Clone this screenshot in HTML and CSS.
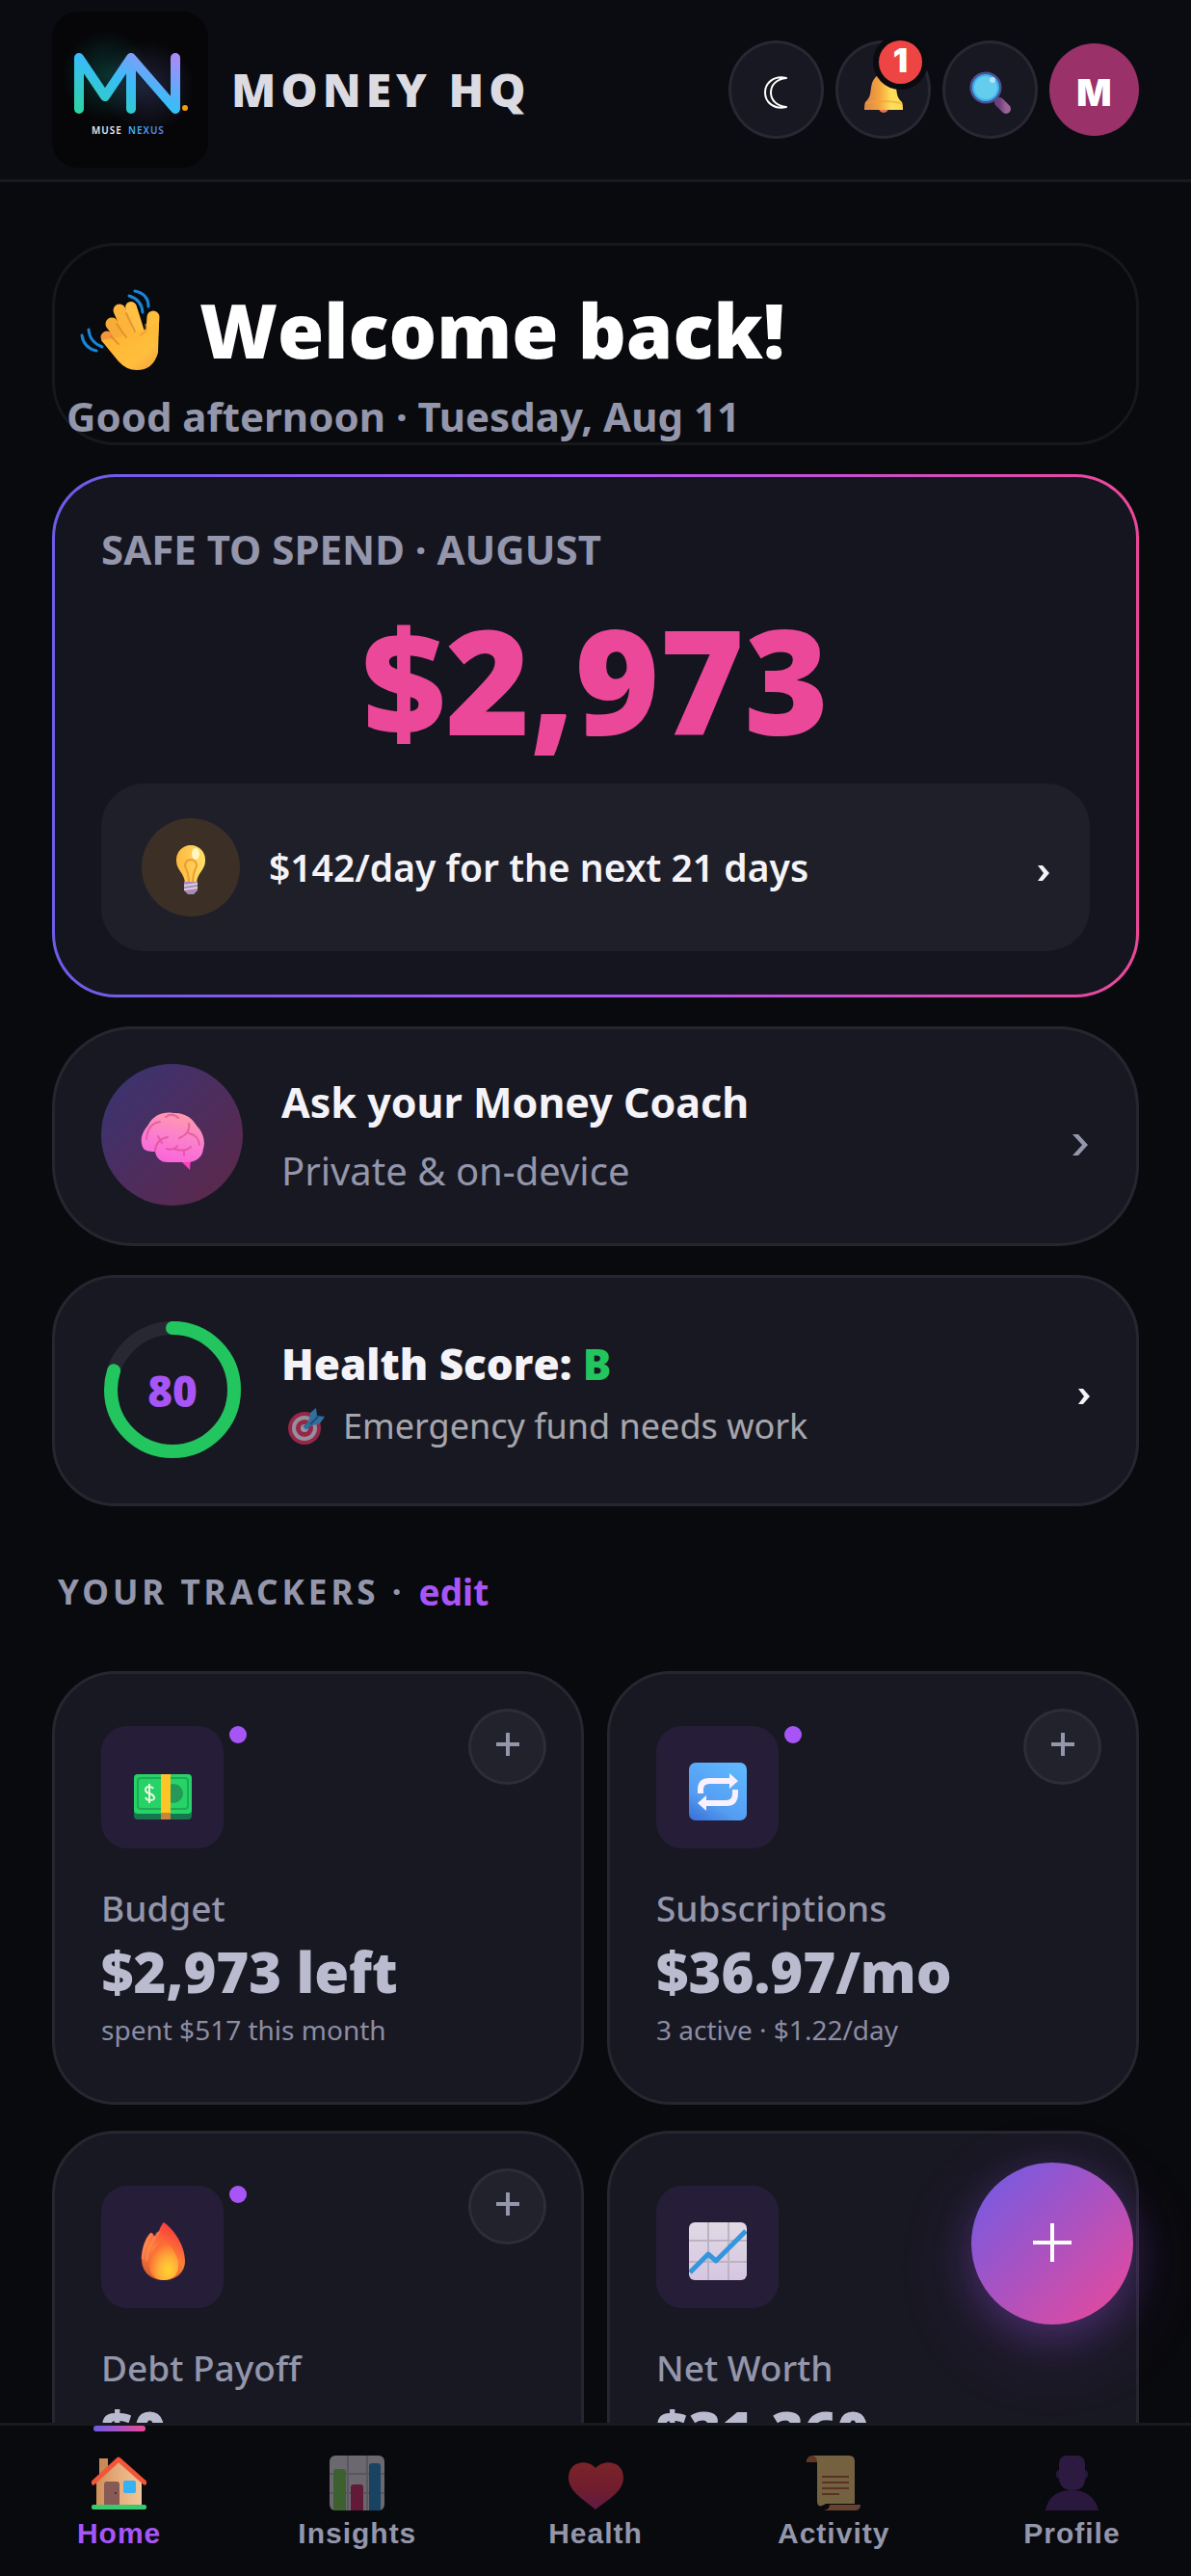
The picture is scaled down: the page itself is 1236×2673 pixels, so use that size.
FILE: index.html
```html
<!DOCTYPE html>
<html lang="en">
<head>
<meta charset="utf-8">
<meta name="viewport" content="width=device-width, initial-scale=1">
<title>Money HQ</title>
<link rel="stylesheet" href="styles.css">
</head>
<body>
<div class="app">
  <header class="topbar">
    <svg class="logo" viewBox="0 0 162 162" role="img" aria-label="Muse Nexus">
      <defs>
        <linearGradient id="mn" x1="0" y1="1" x2="1" y2="0">
          <stop offset="0" stop-color="#2dd4a8"/><stop offset=".5" stop-color="#38bdf8"/><stop offset="1" stop-color="#a78bfa"/>
        </linearGradient>
        <radialGradient id="glowA"><stop offset="0" stop-color="#14b8a6" stop-opacity=".24"/><stop offset="1" stop-color="#14b8a6" stop-opacity="0"/></radialGradient>
        <radialGradient id="glowB"><stop offset="0" stop-color="#818cf8" stop-opacity=".2"/><stop offset="1" stop-color="#818cf8" stop-opacity="0"/></radialGradient>
        <linearGradient id="nexus"><stop offset="0" stop-color="#38bdf8"/><stop offset="1" stop-color="#5b7fe0"/></linearGradient>
      </defs>
      <rect width="162" height="162" rx="27" fill="#060608"/>
      <circle cx="57" cy="66" r="46" fill="url(#glowA)"/>
      <circle cx="100" cy="78" r="48" fill="url(#glowB)"/>
      <path d="M28 101V48L55 88L82 48V101M82 48L128 101V48" fill="none" stroke="url(#mn)" stroke-width="10" stroke-linecap="round" stroke-linejoin="round"/>
      <circle cx="138" cy="100" r="3" fill="#f59e0b"/>
      <text class="logo-text" x="41" y="127" fill="#e8e8ee">MUSE</text>
      <text class="logo-text" x="79" y="127" fill="url(#nexus)">NEXUS</text>
    </svg>
    <div class="brand">MONEY HQ</div>
    <div class="actions">
      <button class="round" type="button" aria-label="Theme">
        <svg width="30" height="34" viewBox="0 0 30 34"><path d="M25 2C12 -1 3 7 3 17S12 35 25 32C15 31 9 25 9 17S15 3 25 2Z" fill="none" stroke="#fff" stroke-width="2" stroke-linejoin="round"/></svg>
      </button>
      <button class="round" type="button" aria-label="Notifications, 1 new">
        <svg width="44" height="44" viewBox="0 0 44 44">
          <defs><linearGradient id="bell"><stop offset=".1" stop-color="#e08a48"/><stop offset=".4" stop-color="#f5a63c"/><stop offset=".7" stop-color="#ffdf5c"/><stop offset="1" stop-color="#ffd850"/></linearGradient></defs>
          <circle cx="22" cy="38" r="5" fill="#e0735a"/>
          <path d="M22 3C13 3 10 10 9 17C8 26 7 28 3 32Q2 34 2 40H42Q42 34 41 32C37 28 36 26 35 17C34 10 31 3 22 3Z" fill="url(#bell)"/>
          <path d="M4 33Q22 29 40 33" fill="none" stroke="#f0a33c" stroke-width="2" opacity=".6"/>
        </svg>
        <span class="badge">1</span>
      </button>
      <button class="round" type="button" aria-label="Search">
        <svg width="44" height="44" viewBox="0 0 44 44">
          <defs><linearGradient id="handle"><stop offset="0" stop-color="#6d3f7c"/><stop offset="1" stop-color="#9c6398"/></linearGradient></defs>
          <path d="M31 32L38 39" stroke="url(#handle)" stroke-width="10" stroke-linecap="round"/>
          <circle cx="17" cy="17" r="15" fill="#62cdec" stroke="#4a5394" stroke-width="3"/>
          <circle cx="17" cy="17" r="13" fill="none" stroke="#3fb0ef" stroke-width="2"/>
          <ellipse cx="24" cy="9" rx="3" ry="3" fill="#b8e4fa"/>
        </svg>
      </button>
      <button class="avatar" type="button" aria-label="Account">M</button>
    </div>
  </header>

  <main class="content">
    <section class="welcome">
      <h1 class="welcome-title">
        <svg width="84" height="84" viewBox="0 0 84 84" aria-hidden="true">
          <defs><linearGradient id="hand" x1="0" y1="0" x2="1" y2="1"><stop offset="0" stop-color="#ffb02e"/><stop offset=".7" stop-color="#ffbe3d"/><stop offset="1" stop-color="#f3a03c"/></linearGradient></defs>
          <g fill="none" stroke="#1686d9" stroke-width="3" stroke-linecap="round"><path d="M57 2Q71 5 71 18M51 7Q64 11 65 24M2 48Q4 61 17 64M9 42Q10 55 23 60"/></g>
          <path d="M76 29L74 56" stroke="#ffbe3d" stroke-width="13" stroke-linecap="round"/>
          <path d="M28 50L46 68" stroke="#f5963f" stroke-width="13" stroke-linecap="round"/>
          <path d="M33 36L51 60" stroke="#f7ab38" stroke-width="13" stroke-linecap="round"/>
          <path d="M41 22L55 54" stroke="#fcb53a" stroke-width="13" stroke-linecap="round"/>
          <path d="M53 19L62 48" stroke="#ffc044" stroke-width="12" stroke-linecap="round"/>
          <path d="M22 53L40 75Q48 84 59 84Q76 84 81 66L82 34L68 42L56 44L40 50Z" fill="url(#hand)"/>
          <path d="M48 25L57 44M38 36L48 50M32 49L40 57" stroke="#dd8526" stroke-width="2" stroke-linecap="round" opacity=".7"/>
          <path d="M68 36Q71 44 62 48" fill="none" stroke="#eb972b" stroke-width="2" opacity=".6"/>
        </svg>
        <span>Welcome back!</span>
      </h1>
      <p class="welcome-sub">Good afternoon · Tuesday, Aug 11</p>
    </section>

    <section class="safe">
      <h2 class="safe-label">SAFE TO SPEND · AUGUST</h2>
      <div class="safe-amount">$2,973</div>
      <button class="tip" type="button">
        <span class="tip-icon">
          <svg width="32" height="52" viewBox="0 0 32 52">
            <defs><linearGradient id="bulb"><stop offset="0" stop-color="#fdb83c"/><stop offset="1" stop-color="#ffe06a"/></linearGradient></defs>
            <path d="M16 0A15 15 0 0 0 1 16C1 26 9 28 10 39H22C23 28 31 26 31 16A15 15 0 0 0 16 0Z" fill="url(#bulb)"/>
            <path d="M14 39Q14 29 10 22Q10 15 16 15T22 22Q18 29 18 39" fill="none" stroke="#f39a35" stroke-width="2"/>
            <ellipse cx="21" cy="9" rx="4" ry="6" fill="#fff6c4"/>
            <path d="M9 38H23V47L19 51H13L9 47Z" fill="#a78bb4"/><path d="M9 42L23 40M9 46L23 44" stroke="#dccbe2" stroke-width="2"/>
          </svg>
        </span>
        <span class="tip-text">$142/day for the next 21 days</span>
        <svg class="chev-sm" viewBox="0 0 12 16"><path d="M0 0H5L12 8L5 16H0L6 8Z"/></svg>
      </button>
    </section>

    <a class="row coach" href="#coach">
      <span class="coach-icon">
        <svg width="66" height="60" viewBox="0 0 66 60">
          <defs><linearGradient id="brain" x1=".6" y1="0" x2=".3" y2="1"><stop offset="0" stop-color="#ff9bac"/><stop offset=".5" stop-color="#fb7fce"/><stop offset="1" stop-color="#fa62dc"/></linearGradient></defs>
          <path d="M41 50L51 60L52 48Z" fill="#ff3fc0"/>
          <path d="M2 36C-2 26 4 18 8 13C13 3 24 -1 34 1C46 0 54 7 58 14C66 22 67 32 65 38C64 48 56 52 48 52H28C20 52 16 47 15 41C8 41 3 40 2 36Z" fill="url(#brain)"/>
          <path d="M6 28Q7 12 20 10M26 5Q33 0 39 6M40 27Q52 22 50 12M50 22Q60 24 61 34M15 40Q16 28 28 26M18 25L22 32M27 38Q35 40 38 35M34 38Q46 42 52 36M45 39V45" fill="none" stroke="#dd4f93" stroke-width="2" stroke-linecap="round" opacity=".7"/>
        </svg>
      </span>
      <span class="row-text">
        <span class="coach-title">Ask your Money Coach</span>
        <span class="coach-sub">Private &amp; on-device</span>
      </span>
      <svg class="chev-lg" viewBox="0 0 16 22"><path d="M0 0H6L16 11L6 22H0L10 11Z"/></svg>
    </a>

    <a class="row health" href="#health">
      <span class="ring">
        <svg width="148" height="144" viewBox="0 0 148 144">
          <circle cx="74" cy="71" r="64" fill="none" stroke="#282832" stroke-width="14"/>
          <circle cx="74" cy="71" r="64" fill="none" stroke="#22c55e" stroke-width="14" stroke-linecap="round" pathLength="100" stroke-dasharray="80 100" transform="rotate(-90 74 71)"/>
        </svg>
        <span class="ring-value">80</span>
      </span>
      <span class="row-text">
        <span class="health-title">Health Score: <span class="grade">B</span></span>
        <span class="health-sub">
          <svg width="40" height="40" viewBox="0 0 40 40" aria-hidden="true">
            <circle cx="18" cy="22" r="17" fill="#d9305c"/><circle cx="18" cy="22" r="13" fill="#d9cfe2"/><circle cx="18" cy="22" r="9" fill="#d9305c"/><circle cx="18" cy="22" r="4" fill="#e2d5e8"/>
            <path d="M18 22L30 11" stroke="#33a0dc" stroke-width="5"/><path d="M22 16L24 6L30 1L31 9L39 10L34 17L24 20Z" fill="#3f9fe0"/><path d="M24 18L33 9" stroke="#2468a8" stroke-width="2"/>
          </svg>
          Emergency fund needs work
        </span>
      </span>
      <svg class="chev-sm" viewBox="0 0 12 16"><path d="M0 0H5L12 8L5 16H0L6 8Z"/></svg>
    </a>

    <h2 class="section-title"><span class="section-name">YOUR TRACKERS ·</span> <a class="edit" href="#edit">edit</a></h2>

    <section class="grid">
      <article class="card">
        <div class="card-head">
          <span class="card-icon">
            <svg width="60" height="60" viewBox="0 0 60 60">
              <rect y="20" width="60" height="39" rx="4" fill="#17774c"/><rect y="12" width="60" height="41" rx="4" fill="#26d367"/>
              <rect x="4" y="16" width="52" height="32" rx="3" fill="none" stroke="#1fa957" stroke-width="2"/>
              <circle cx="41" cy="32" r="10" fill="#259a58"/>
              <path d="M20 27Q19 25 16 25Q12 25 12 28T16 32T21 36T16 39Q13 39 12 36M16 22V42" fill="none" stroke="#e9f7dc" stroke-width="2"/>
              <rect x="28" y="12" width="10" height="41" fill="#ffc426"/><rect x="28" y="52" width="10" height="7" fill="#c8843b"/>
            </svg>
          </span>
          <span class="dot"></span>
          <button class="add" type="button" aria-label="Add to Budget"><svg viewBox="0 0 24 24"><path d="M12 0V24M0 12H24"/></svg></button>
        </div>
        <h3 class="card-label">Budget</h3>
        <div class="card-value">$2,973 left</div>
        <p class="card-note">spent $517 this month</p>
      </article>
      <article class="card">
        <div class="card-head">
          <span class="card-icon">
            <svg width="60" height="60" viewBox="0 0 60 60">
              <defs><linearGradient id="blue" x1=".8" y1="0" x2=".2" y2="1"><stop offset="0" stop-color="#5fb8ff"/><stop offset=".7" stop-color="#549df2"/><stop offset="1" stop-color="#3f78dc"/></linearGradient></defs>
              <rect width="60" height="60" rx="7" fill="url(#blue)"/>
              <path d="M12 32V28Q12 19 21 19H43M48 28V32Q48 42 39 42H17" fill="none" stroke="#faf0ff" stroke-width="6"/>
              <path d="M42 11L51 19L42 27ZM18 34L9 42L18 50Z" fill="#faf0ff"/>
            </svg>
          </span>
          <span class="dot"></span>
          <button class="add" type="button" aria-label="Add to Subscriptions"><svg viewBox="0 0 24 24"><path d="M12 0V24M0 12H24"/></svg></button>
        </div>
        <h3 class="card-label">Subscriptions</h3>
        <div class="card-value">$36.97/mo</div>
        <p class="card-note">3 active · $1.22/day</p>
      </article>
      <article class="card">
        <div class="card-head">
          <span class="card-icon">
            <svg width="60" height="60" viewBox="0 0 60 60">
              <defs>
                <linearGradient id="fire" x1=".2" y1="1" x2=".6" y2="0"><stop offset="0" stop-color="#d9592c"/><stop offset=".5" stop-color="#ff8038"/><stop offset="1" stop-color="#f8393c"/></linearGradient>
                <radialGradient id="core" cx=".65" cy=".75" r=".7"><stop offset="0" stop-color="#ffd430"/><stop offset=".5" stop-color="#ffac38"/><stop offset="1" stop-color="#fb6a35"/></radialGradient>
              </defs>
              <path d="M31 0C42 8 53 24 53 40C53 52 44 60 31 60S8 52 8 38C8 25 13 15 17 11C20 10 20 14 22 15C26 11 28 2 31 0Z" fill="url(#fire)"/>
              <path d="M9 37Q11 20 18 13M13 39Q14 25 25 11" fill="none" stroke="#ff8c62" stroke-width="3" stroke-linecap="round" opacity=".6"/>
              <path d="M33 19C40 26 47 36 46 46C46 55 39 60 31 60S16 54 16 45C16 34 25 20 33 19Z" fill="url(#core)"/>
            </svg>
          </span>
          <span class="dot"></span>
          <button class="add" type="button" aria-label="Add to Debt Payoff"><svg viewBox="0 0 24 24"><path d="M12 0V24M0 12H24"/></svg></button>
        </div>
        <h3 class="card-label">Debt Payoff</h3>
        <div class="card-value">$0</div>
      </article>
      <article class="card">
        <div class="card-head">
          <span class="card-icon">
            <svg width="60" height="60" viewBox="0 0 60 60">
              <defs><linearGradient id="paper" x2="0" y2="1"><stop offset="0" stop-color="#e0dae4"/><stop offset="1" stop-color="#d6c6e2"/></linearGradient></defs>
              <rect width="60" height="60" rx="6" fill="url(#paper)"/>
              <path d="M20 0V60M41 0V60M0 19H60M0 41H60" stroke="#bcb3c2" stroke-width="2"/>
              <path d="M1 52L20 33L28 40L59 9" fill="none" stroke="#3396de" stroke-width="5" stroke-linejoin="round"/>
            </svg>
          </span>
        </div>
        <h3 class="card-label">Net Worth</h3>
        <div class="card-value">$31,360</div>
      </article>
    </section>
  </main>

  <button class="fab" type="button" aria-label="Add"><svg viewBox="0 0 40 40"><path d="M20 0V40M0 20H40"/></svg></button>

  <nav class="tabs">
    <a class="tab active" href="#home">
      <svg viewBox="0 0 57 57">
        <defs><linearGradient id="wall"><stop offset="0" stop-color="#cf8f58"/><stop offset=".4" stop-color="#e3a876"/><stop offset="1" stop-color="#f0c79a"/></linearGradient></defs>
        <rect x="8" y="3" width="9" height="24" fill="#c98a55"/><path d="M5 24L28 5L52 24V53H5Z" fill="url(#wall)"/>
        <rect x="13" y="27" width="16" height="26" rx="3" fill="#875a55"/><circle cx="25" cy="39" r="1" fill="#42251f"/>
        <rect x="33" y="26" width="13" height="13" rx="2" fill="#36b1f5"/>
        <path d="M2 28L28 4L55 28" fill="none" stroke="#f25538" stroke-width="5" stroke-linecap="round" stroke-linejoin="round"/>
        <rect x="0" y="51" width="57" height="5" rx="2" fill="#3ac96d"/>
      </svg>
      <span>Home</span>
    </a>
    <a class="tab" href="#insights">
      <svg viewBox="0 0 57 57">
        <rect width="57" height="57" rx="6" fill="#cdc5d1"/><path d="M19 0V57M39 0V57M0 19H57M0 39H57" stroke="#aaa1ae" stroke-width="2"/>
        <path d="M4 57V17Q4 14 7 14H14Q17 14 17 17V57Z" fill="#72b552"/><path d="M22 57V33Q22 30 25 30H32Q35 30 35 33V57Z" fill="#b92c60"/><path d="M41 57V11Q41 8 44 8H50Q53 8 53 11V57Z" fill="#297db8"/>
      </svg>
      <span>Insights</span>
    </a>
    <a class="tab" href="#healthtab">
      <svg viewBox="0 0 57 57">
        <defs><linearGradient id="heart" x2="0" y2="1"><stop offset="0" stop-color="#ec4045"/><stop offset=".6" stop-color="#d52f50"/><stop offset="1" stop-color="#b62c7c"/></linearGradient></defs>
        <path d="M28 13C22 4 0 4 0 23C0 37 15 45 28 56C42 45 57 37 57 23C57 4 35 4 28 13Z" fill="url(#heart)"/>
      </svg>
      <span>Health</span>
    </a>
    <a class="tab" href="#activity">
      <svg viewBox="0 0 57 57">
        <path d="M8 0H44Q50 0 50 6V50H20Q11 56 11 47V7H0Q0 0 8 0Z" fill="#dcb873"/><path d="M0 7Q1 0 7 0Q11 2 11 7Z" fill="#b3653f"/>
        <path d="M24 51H56Q56 57 50 57H18Q24 56 24 51Z" fill="#c17955"/>
        <path d="M16 22H44M16 28H44M16 34H44M16 40H34" stroke="#a65b3b" stroke-width="2"/>
      </svg>
      <span>Activity</span>
    </a>
    <a class="tab" href="#profile">
      <svg viewBox="0 0 57 57">
        <rect x="12" y="15" width="33" height="9" rx="4" fill="#452468"/><path d="M15 10Q15 0 23 0H34Q42 0 42 10V24Q42 36 29 36T15 24Z" fill="#4f2a76"/><path d="M1 57Q5 36 28 36T56 57Z" fill="#4b2772"/>
      </svg>
      <span>Profile</span>
    </a>
  </nav>
</div>
</body>
</html>
```
FILE: styles.css
```css
* { box-sizing: border-box; margin: 0; }
body {
  background: #090a0d;
  color: #f3f3f8;
  font-family: "Noto Sans", "Open Sans", sans-serif;
}
button { padding: 0; border: 0; background: none; color: inherit; font: inherit; cursor: pointer; }
a { color: inherit; text-decoration: none; }
svg { display: block; flex: none; }

.app { position: relative; display: flex; flex-direction: column; height: 100vh; }

.brand, .welcome-title, .safe-amount, .health-title, .ring-value, .card-value {
  font-family: "Open Sans", "Noto Sans", sans-serif;
  font-weight: 800;
}

.topbar {
  display: flex;
  align-items: center;
  padding: 12px 54px;
  background: #0b0c11;
  border-bottom: 3px solid #191a1f;
}
.logo { width: 162px; height: 162px; }
.logo-text { font-size: 10px; font-weight: 600; letter-spacing: 1px; }
.brand { margin-left: 24px; font-size: 48px; letter-spacing: 5px; line-height: 60px; color: #dcdbe2; }
.actions { display: flex; align-items: center; gap: 12px; margin-left: auto; }
.round {
  position: relative;
  display: grid;
  place-items: center;
  width: 99px;
  height: 102px;
  padding-top: 6px;
  border: 3px solid #282833;
  border-radius: 50%;
  background: #181822;
}
.badge {
  position: absolute;
  top: -9px;
  right: 0;
  width: 57px;
  height: 57px;
  border: 6px solid #0a0b0f;
  border-radius: 50%;
  background: #ef4444;
  color: #fff;
  font: 900 34px/42px Inter, sans-serif;
}
.avatar { width: 93px; height: 96px; border-radius: 50%; background: #9a3168; color: #fff; font: 900 38px/102px Inter, sans-serif; }

.content {
  flex: 1;
  min-height: 0;
  display: flex;
  flex-direction: column;
  gap: 30px;
  padding: 63px 54px 0;
  overflow-y: auto;
  scrollbar-width: none;
}
.content > * { flex: none; }

.welcome { padding: 27px 12px 0; border: 3px solid #17181c; border-radius: 66px; }
.welcome-title { display: flex; align-items: center; gap: 40px; padding-left: 14px; font-size: 78px; line-height: 120px; color: #fff; }
.welcome-sub { padding-top: 3px; font-size: 42px; font-weight: 700; line-height: 54px; color: #9496ab; }

.safe {
  padding: 48px 48px 45px;
  border: 3px solid transparent;
  border-radius: 66px;
  background: linear-gradient(#151520, #151520) padding-box, linear-gradient(90deg, #6c5ce7, #a855f7 50%, #ec4899) border-box;
}
.safe-label { font-size: 42px; font-weight: 700; line-height: 54px; color: #9496ab; }
.safe-amount { margin: 24px 0; font-size: 150px; line-height: 168px; text-align: center; color: #ec4899; }
.tip { display: flex; align-items: center; gap: 30px; width: 100%; padding: 36px 42px; border-radius: 45px; background: #1f1f2a; text-align: left; }
.tip-icon { display: grid; place-items: center; width: 102px; height: 102px; padding-top: 6px; border-radius: 50%; background: #3c2f26; }
.tip-text { font-size: 39px; font-weight: 600; line-height: 54px; }
.chev-sm { width: 12px; height: 16px; margin: 12px 0 0 auto; fill: #f3f3f8; }
.chev-lg { width: 16px; height: 22px; margin: 21px 2px 0 auto; fill: #9496ab; }

.row { display: flex; align-items: center; padding: 36px 48px 39px; border: 3px solid #262630; border-radius: 84px; background: #181822; }
.row-text { display: flex; flex-direction: column; }
.coach { gap: 40px; }
.coach .row-text { padding-top: 3px; }
.coach-icon { display: grid; place-items: center; width: 147px; height: 147px; padding-top: 12px; border-radius: 50%; background: linear-gradient(135deg, #373474, #4d2d5e 50%, #5f2748); }
.coach-title { font-size: 43px; font-weight: 700; line-height: 72px; }
.coach-sub { font-size: 40px; line-height: 70px; color: #9496ab; }

.health { gap: 39px; padding: 45px 48px; border-radius: 66px; }
.ring { position: relative; }
.ring-value { position: absolute; inset: 0; text-align: center; font-size: 44px; line-height: 144px; color: #a855f7; }
.health .row-text { padding-top: 8px; }
.health-title { font-size: 44px; line-height: 66px; }
.grade { color: #22c55e; }
.health-sub { display: flex; align-items: center; gap: 18px; padding-left: 6px; font-size: 36px; line-height: 64px; opacity: .65; }

.section-title { display: flex; align-items: center; gap: 14px; margin-top: 29px; margin-bottom: 22px; padding-left: 6px; font-size: 35px; line-height: 60px; color: #9496ab; }
.section-name { font-weight: 700; letter-spacing: 4px; }
.edit { font-size: 37px; font-weight: 700; color: #a855f7; }

.grid { display: grid; grid-template-columns: 1fr 1fr; gap: 27px 24px; }
.card { min-height: 450px; padding: 36px 36px 54px 48px; border: 3px solid #262630; border-radius: 66px; background: #181822; }
.card-head { display: flex; align-items: flex-start; gap: 6px; }
.card-icon { display: grid; place-items: center; width: 127px; height: 127px; margin-top: 18px; padding-top: 9px; border-radius: 27px; background: #261e38; }
.dot { width: 18px; height: 18px; margin-top: 18px; border-radius: 50%; background: #a855f7; }
.add { display: grid; place-items: center; width: 81px; height: 79px; margin-left: auto; padding-bottom: 6px; border: 3px solid #2d2d37; border-radius: 50%; background: #22222c; }
.add svg { width: 24px; height: 24px; fill: none; stroke: #9496ab; stroke-width: 4px; }
.card-label { margin-top: 35px; font-size: 37px; font-weight: 500; line-height: 54px; color: #9496ab; }
.card-value { font-size: 58px; line-height: 78px; color: #babbcf; }
.card-note { font-size: 28px; line-height: 42px; color: #8c8da4; }

.fab {
  position: absolute;
  right: 60px;
  bottom: 261px;
  display: grid;
  place-items: center;
  width: 168px;
  height: 168px;
  border-radius: 50%;
  background: linear-gradient(135deg, #6c5ce7, #ec4899);
  box-shadow: 0 24px 84px rgba(168, 85, 247, .16), 0 12px 42px rgba(168, 85, 247, .26);
}
.fab svg { width: 40px; height: 40px; margin-bottom: 3px; fill: none; stroke: #fff; stroke-width: 4px; }

.tabs { position: relative; display: flex; height: 159px; border-top: 3px solid #191a1f; background: #090a0d; }
.tab { position: relative; flex: 1; display: flex; flex-direction: column; align-items: center; gap: 6px; padding-top: 31px; font: 700 30px/36px "Liberation Sans", sans-serif; letter-spacing: 1px; color: #9496ab; }
.tab svg { width: 57px; height: 57px; opacity: .5; }
.tab.active { color: #a855f7; }
.tab.active svg { opacity: 1; }
.tab.active::before { content: ""; position: absolute; top: 0; width: 54px; height: 6px; border-radius: 3px; background: linear-gradient(90deg, #6c5ce7, #ec4899); }
```
